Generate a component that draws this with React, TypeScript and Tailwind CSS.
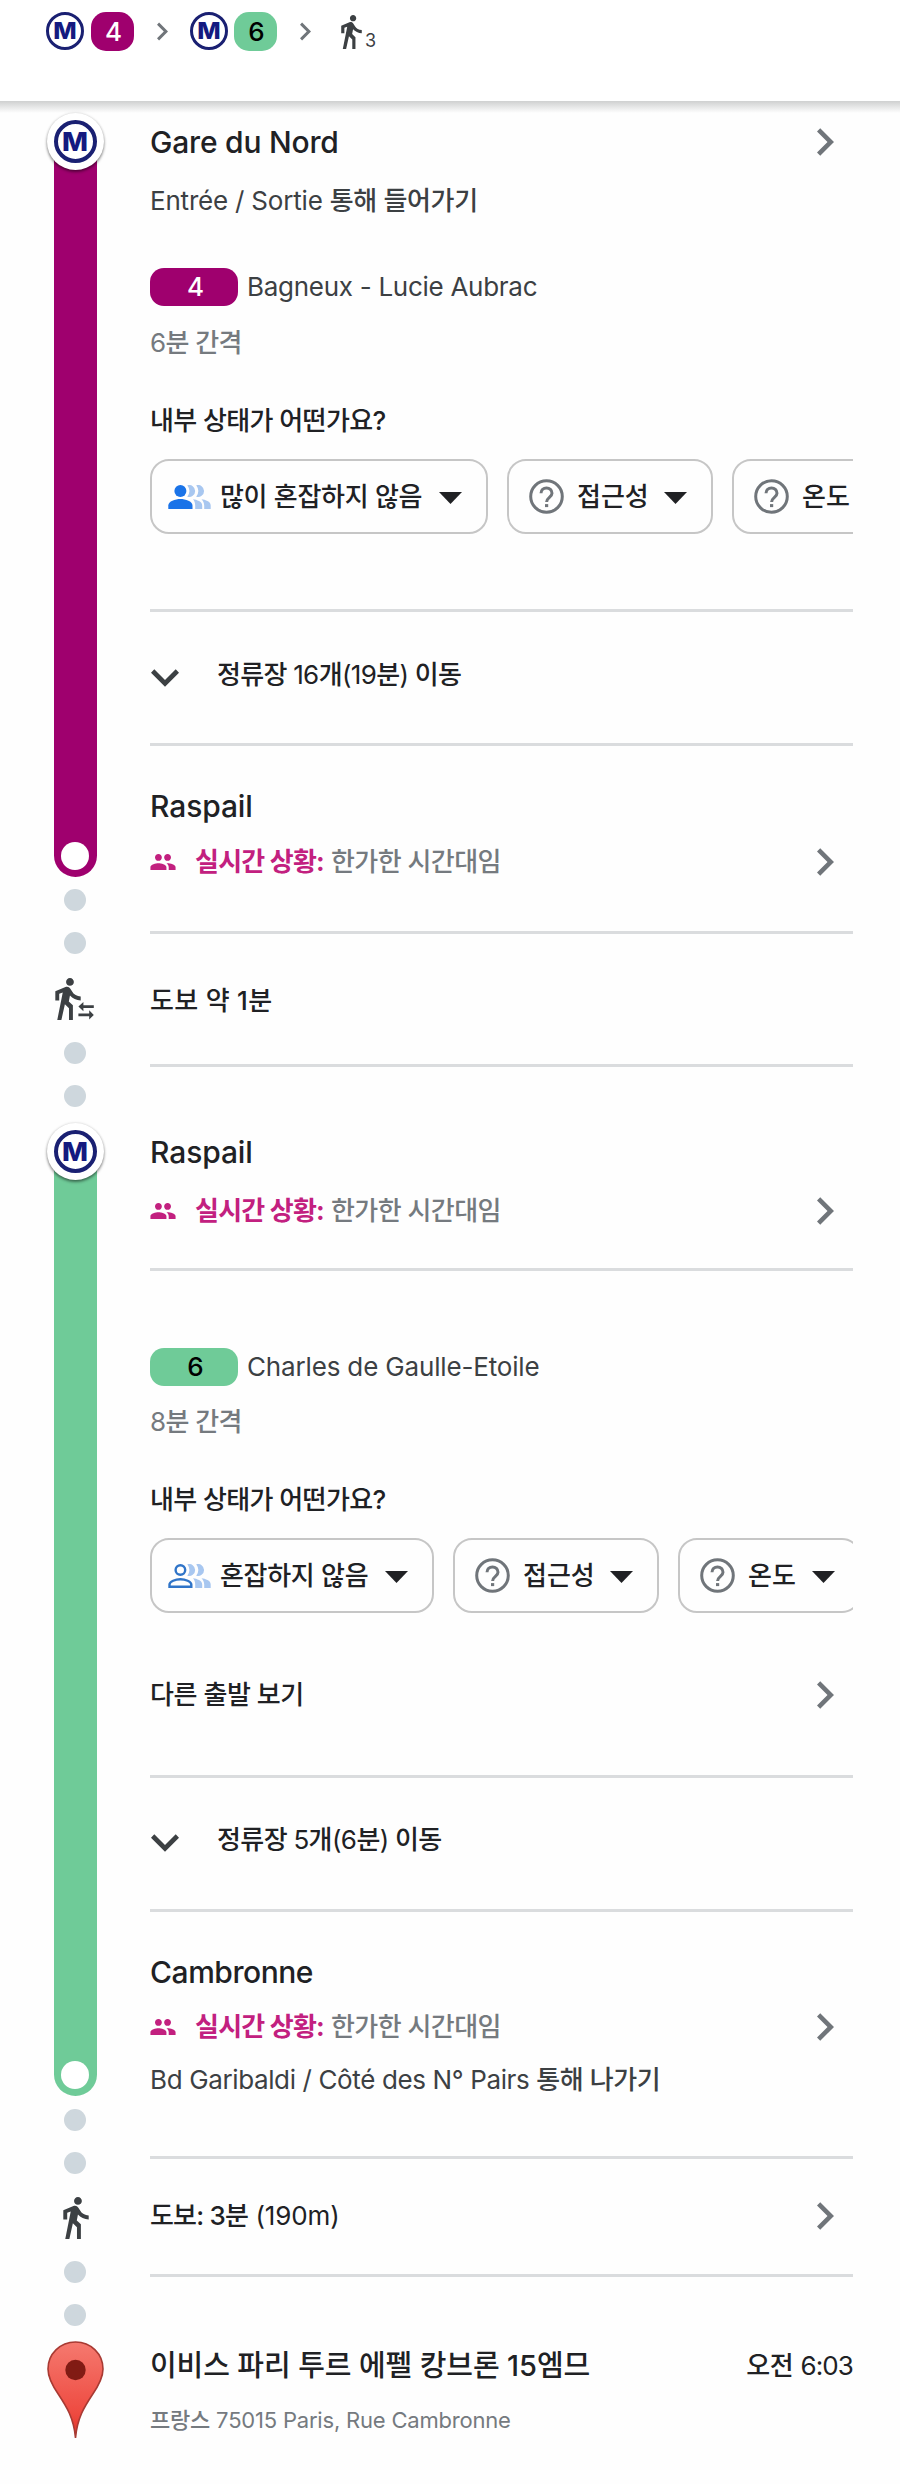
import React from "react";
import clsx from "clsx";

const WALK_PATH =
  "M13.5 5.5c1.1 0 2-.9 2-2s-.9-2-2-2-2 .9-2 2 .9 2 2 2zM9.8 8.9L7 23h2.1l1.8-8 2.1 2v6h2v-7.5l-2.1-2 .6-3C14.8 12 16.8 13 19 13v-2c-1.9 0-3.5-1-4.3-2.4l-1-1.6c-.4-.6-1-1-1.7-1-.3 0-.5.1-.8.1L6 8.3V13h2V9.6l1.8-.7z";

function WalkIcon({ className }: { className: string }) {
  return (
    <svg viewBox="6 1.5 13 21.5" className={clsx("fill-[#3c4043]", className)}>
      <path d={WALK_PATH} />
    </svg>
  );
}

function TransferWalkIcon() {
  return (
    <svg viewBox="0 0 40 42" className="h-[42px] w-[40px] fill-[#3c4043]">
      <g transform="translate(-11.4 -2.93) scale(1.953)">
        <path d={WALK_PATH} />
      </g>
      <path d="M23.4 28.6l5-4.6v3.2h10.4V30H28.4v3.2z" />
      <path d="M38.8 36.9l-4.6 4.6v-3.2H23.4v-2.8h10.8v-3.2z" />
    </svg>
  );
}

function ChevronRight({ className }: { className: string }) {
  return (
    <svg viewBox="8.59 6 7.41 12" className={clsx("shrink-0 fill-[#70757a]", className)}>
      <path d="M8.59 16.59L13.17 12 8.59 7.41 10 6l6 6-6 6z" />
    </svg>
  );
}

function ChevronDown() {
  return (
    <svg viewBox="6 8.59 12 7.41" className="h-[18px] w-[28px] fill-[#3c4043]">
      <path d="M7.41 8.59L12 13.17l4.59-4.58L18 10l-6 6-6-6z" />
    </svg>
  );
}

function GroupIcon() {
  return (
    <svg viewBox="1 5 22 14" className="h-[16px] w-[26px] fill-[#c2207f]">
      <path d="M16 11c1.66 0 2.99-1.34 2.99-3S17.66 5 16 5c-1.66 0-3 1.34-3 3s1.34 3 3 3zm-8 0c1.66 0 2.99-1.34 2.99-3S9.66 5 8 5C6.34 5 5 6.34 5 8s1.34 3 3 3zm0 2c-2.33 0-7 1.17-7 3.5V19h14v-2.5c0-2.33-4.67-3.5-7-3.5zm8 0c-.29 0-.62.02-.97.05 1.16.84 1.97 1.97 1.97 3.45V19h6v-2.5c0-2.33-4.67-3.5-7-3.5z" />
    </svg>
  );
}

// one highlighted person out of three; outlined when the train is emptier
function CrowdIcon({ outlined }: { outlined?: boolean }) {
  return (
    <svg viewBox="0 0 43 24" className="h-[24px] w-[43px]">
      <g className="fill-[#a8c7f0]">
        <path d="M19.3.3a6 6 0 1 1 0 11.4a9.5 9.5 0 0 0 0-11.4z" />
        <path d="M28.2.3a6 6 0 1 1 0 11.4a9.5 9.5 0 0 0 0-11.4z" />
        <path d="M25 14.3c3.8.5 9.2 2.2 9.2 6.2V24h-7v-3.5c0-2.6-.8-4.5-2.2-6.2z" />
        <path d="M33.5 14.3c3.8.5 9.2 2.2 9.2 6.2V24h-6.5v-3.5c0-2.6-1.2-4.5-2.7-6.2z" />
      </g>
      {outlined ? (
        <g className="fill-none stroke-[#2f74c8] stroke-[2.4]">
          <circle cx="12.4" cy="6" r="4.8" />
          <path d="M1.5 22.8v-2.3c0-3 6-5.2 10.9-5.2s10.9 2.2 10.9 5.2v2.3z" />
        </g>
      ) : (
        <g className="fill-[#1a73e8]">
          <circle cx="12.4" cy="6" r="6" />
          <path d="M.3 24v-3.5c0-4 7-6.4 12.1-6.4s12.1 2.4 12.1 6.4V24z" />
        </g>
      )}
    </svg>
  );
}

function HelpIcon() {
  return (
    <svg viewBox="0 0 35 35" className="size-[35px] fill-none stroke-[#70757a] stroke-3">
      <circle cx="17.5" cy="17.5" r="15.8" />
      <path d="M12 14.2a5.5 5.3 0 0 1 11 0c0 4-5.4 4.3-5.4 8.8" />
      <path d="M16 26.6h3.2" />
    </svg>
  );
}

function PinIcon() {
  return (
    <svg viewBox="0 0 57 98" className="mt-[15px] h-[98px] w-[57px]">
      <defs>
        <linearGradient id="pin" x1="0" y1="0" x2="0" y2="1">
          <stop offset="0" stopColor="#f5796f" />
          <stop offset=".75" stopColor="#ee4a40" />
          <stop offset="1" stopColor="#e03127" />
        </linearGradient>
      </defs>
      <path
        d="M28.5 1C13 1 1 13 1 28c0 9.500 5 17.500 10.500 25.500C19.500 65.500 26.800 77 28.500 97 30.200 77 37.500 65.500 45.500 53.500 51 45.500 56 37.500 56 28 56 13 44 1 28.500 1z"
        fill="url(#pin)"
        stroke="#a83a33"
        strokeWidth="1.600"
      />
      <circle cx="28.5" cy="29" r="10.2" fill="#811b14" />
    </svg>
  );
}

function MetroLogo({ small }: { small?: boolean }) {
  return (
    <span
      className={clsx(
        "flex items-center justify-center rounded-full border-[#1a2072] bg-white font-extrabold text-[#141a80]",
        small ? "size-[38px] border-[3.5px] text-[23px]" : "size-[43px] border-4 text-[25.5px]"
      )}
    >
      <span className="scale-x-108 leading-none">M</span>
    </span>
  );
}

function StationMarker({ className }: { className?: string }) {
  return (
    <div
      className={clsx(
        "relative z-10 flex size-[57px] items-center justify-center rounded-full bg-white shadow-[0_2px_3px_rgba(0,0,0,0.45),0_0_3px_rgba(0,0,0,0.15)]",
        className
      )}
    >
      <MetroLogo />
    </div>
  );
}

function LineBar({ className }: { className: string }) {
  return (
    <div className={clsx("-mt-[28px] flex w-[43px] items-end justify-center rounded-b-full pb-[7px]", className)}>
      <span className="size-[28px] rounded-full bg-white" />
    </div>
  );
}

function Dots({ className }: { className: string }) {
  return (
    <div className={clsx("flex flex-col gap-[21px]", className)}>
      <span className="size-[22px] rounded-full bg-[#ced7dd]" />
      <span className="size-[22px] rounded-full bg-[#ced7dd]" />
    </div>
  );
}

function Divider({ className }: { className: string }) {
  return <div className={clsx("h-[3px] bg-[#dadcde]", className)} />;
}

function StationName({ className, children }: { className: string; children: React.ReactNode }) {
  return <h2 className={clsx("h-[40px] text-[30px] leading-[40px] font-[450]", className)}>{children}</h2>;
}

function LiveStatus({ className }: { className: string }) {
  return (
    <div className={clsx("flex h-[36px] items-center", className)}>
      <GroupIcon />
      <span className="ml-[19px] font-bold tracking-[-0.79px] text-[#c2207f]">실시간 상황:</span>
      <span className="ml-[7px] font-medium tracking-[-0.55px] text-[#757a7f]">한가한 시간대임</span>
      <ChevronRight className="mr-[19px] ml-auto h-[28px] w-[17px]" />
    </div>
  );
}

interface LineDirectionProps {
  line: string;
  badge: string;
  name: React.ReactNode;
  className: string;
}

function LineDirection({ line, badge, name, className }: LineDirectionProps) {
  return (
    <div className={clsx("flex h-[38px] items-center", className)}>
      <span className={clsx("flex h-[38px] w-[88px] items-center justify-center rounded-[14px] pl-[3px] font-medium", badge)}>
        {line}
      </span>
      {name}
    </div>
  );
}

function Chip({ icon, label, className }: { icon: React.ReactNode; label: string; className: string }) {
  return (
    <button className={clsx("flex h-[75px] shrink-0 items-center rounded-[19px] border-2 border-[#c6c6c6] font-medium", className)}>
      {icon}
      {label}
      <svg viewBox="0 0 23 12" className="mt-[3px] ml-auto h-[12px] w-[23px] fill-[#202124]">
        <path d="M0 0h23L11.5 12z" />
      </svg>
    </button>
  );
}

export default function App() {
  return (
    <div className="min-h-[2484px] w-[900px] overflow-hidden bg-[#fefefe] font-['Inter','Noto_Sans_CJK_KR',sans-serif] text-[26px] leading-[36px] whitespace-nowrap text-[#202124]">
      <header className="relative flex h-[101px] items-start bg-white pt-[12px] pl-[46px]">
        <MetroLogo small />
        <span className="ml-[7px] flex h-[39px] w-[43px] items-center justify-center rounded-[15px] bg-[#9f006e] pl-[2px] font-medium text-white">
          4
        </span>
        <ChevronRight className="mt-[10px] ml-[23px] h-[19px] w-[11px]" />
        <span className="ml-[22px]">
          <MetroLogo small />
        </span>
        <span className="ml-[6px] flex h-[39px] w-[43px] items-center justify-center rounded-[15px] bg-[#6fcb98] pl-[2px] font-medium text-black">
          6
        </span>
        <ChevronRight className="mt-[10px] ml-[23px] h-[19px] w-[11px]" />
        <WalkIcon className="mt-[3px] ml-[30px] h-[34px] w-[21px]" />
        <span className="mt-[19px] ml-[3px] text-[18px] leading-[20px] text-[#3c4043]">3</span>
        <div className="absolute inset-x-0 top-full h-[12px] bg-linear-to-b from-[#cfd0d0] to-transparent" />
      </header>

      <main className="flex">
        {/* route rail */}
        <div className="flex w-[150px] flex-col items-center">
          <StationMarker className="mt-[12px]" />
          <LineBar className="h-[735px] bg-[#9f006e]" />
          <Dots className="mt-[12px]" />
          <div className="mt-[24px]">
            <TransferWalkIcon />
          </div>
          <Dots className="mt-[22px]" />
          <StationMarker className="mt-[16px]" />
          <LineBar className="h-[944px] bg-[#6fcb98]" />
          <Dots className="mt-[13px]" />
          <WalkIcon className="mt-[23px] ml-[2px] h-[42px] w-[26px]" />
          <Dots className="mt-[22px]" />
          <PinIcon />
        </div>

        <div className="w-[703px]">
          <div className="mt-[21px] flex items-center justify-between">
            <StationName className="tracking-[-0.2px]">Gare du Nord</StationName>
            <ChevronRight className="mr-[19px] h-[28px] w-[17px]" />
          </div>
          <p className="mt-[21px] text-[#3c4043]">
            <span className="tracking-[-0.2px]">Entrée / Sortie </span>
            <span className="font-medium tracking-[-0.35px]">통해 들어가기</span>
          </p>
          <LineDirection
            className="mt-[49px]"
            line="4"
            badge="bg-[#9f006e] text-white"
            name={<span className="ml-[9px] tracking-[-0.28px] text-[#3c4043]">Bagneux - Lucie Aubrac</span>}
          />
          <p className="mt-[19px] tracking-[-0.6px] text-[#757a7f]">
            6<span className="font-medium">분 간격</span>
          </p>
          <p className="mt-[42px] font-medium tracking-[-0.6px]">내부 상태가 어떤가요?</p>
          <div className="mt-[20px] flex gap-[19px] overflow-hidden">
            <Chip
              className="w-[338px] gap-[9px] pr-[24px] pl-[16px] tracking-[-0.3px]"
              icon={<CrowdIcon />}
              label="많이 혼잡하지 않음"
            />
            <Chip className="w-[206px] gap-[13px] pr-[24px] pl-[20px]" icon={<HelpIcon />} label="접근성" />
            <Chip className="w-[183px] gap-[13px] pr-[24px] pl-[20px]" icon={<HelpIcon />} label="온도" />
          </div>
          <Divider className="mt-[75px]" />

          <div className="mt-[45px] flex h-[36px] items-center">
            <span className="mt-[6px] ml-px">
              <ChevronDown />
            </span>
            <p className="ml-[38px] font-medium tracking-[-0.63px]">
              정류장 <span className="font-normal">16</span>개<span className="font-normal">(19</span>분
              <span className="font-normal">)</span> 이동
            </p>
          </div>
          <Divider className="mt-[50px]" />

          <StationName className="mt-[40px] tracking-[-0.1px]">Raspail</StationName>
          <LiveStatus className="mt-[18px]" />
          <Divider className="mt-[51px]" />

          <p className="mt-[49px] font-medium tracking-[0.3px]">도보 약 1분</p>
          <Divider className="mt-[45px]" />

          <StationName className="mt-[65px] tracking-[-0.1px]">Raspail</StationName>
          <LiveStatus className="mt-[21px]" />
          <Divider className="mt-[39px]" />

          <LineDirection
            className="mt-[77px]"
            line="6"
            badge="bg-[#6fcb98] text-black"
            name={<span className="ml-[9px] tracking-[-0.16px] text-[#3c4043]">Charles de Gaulle-Etoile</span>}
          />
          <p className="mt-[18px] tracking-[-0.6px] text-[#757a7f]">
            8<span className="font-medium">분 간격</span>
          </p>
          <p className="mt-[42px] font-medium tracking-[-0.6px]">내부 상태가 어떤가요?</p>
          <div className="mt-[20px] flex gap-[19px] overflow-hidden">
            <Chip
              className="w-[284px] gap-[9px] pr-[24px] pl-[16px] tracking-[-0.3px]"
              icon={<CrowdIcon outlined />}
              label="혼잡하지 않음"
            />
            <Chip className="w-[206px] gap-[13px] pr-[24px] pl-[20px]" icon={<HelpIcon />} label="접근성" />
            <Chip className="w-[183px] gap-[13px] pr-[24px] pl-[20px]" icon={<HelpIcon />} label="온도" />
          </div>
          <div className="mt-[64px] flex items-center justify-between font-medium tracking-[-0.45px]">
            다른 출발 보기
            <ChevronRight className="mr-[19px] h-[28px] w-[17px]" />
          </div>
          <Divider className="mt-[62px]" />

          <div className="mt-[44px] flex h-[36px] items-center">
            <span className="mt-[6px] ml-px">
              <ChevronDown />
            </span>
            <p className="ml-[38px] font-medium tracking-[-0.58px]">
              정류장 <span className="font-normal">5</span>개<span className="font-normal">(6</span>분
              <span className="font-normal">)</span> 이동
            </p>
          </div>
          <Divider className="mt-[51px]" />

          <StationName className="mt-[40px] tracking-[-0.45px]">Cambronne</StationName>
          <LiveStatus className="mt-[17px]" />
          <p className="mt-[17px] text-[#3c4043]">
            <span className="tracking-[-0.37px]">Bd Garibaldi / Côté des N° Pairs </span>
            <span className="font-medium tracking-[-0.45px]">통해 나가기</span>
          </p>
          <Divider className="mt-[58px]" />

          <div className="mt-[39px] flex items-center justify-between">
            <p>
              <span className="font-medium tracking-[-0.8px]">도보: 3분</span>{" "}
              <span className="tracking-[-0.1px]">(190m)</span>
            </p>
            <ChevronRight className="mr-[19px] h-[28px] w-[17px]" />
          </div>
          <Divider className="mt-[40px]" />

          <div className="mt-[69px] flex h-[40px] items-center justify-between">
            <h2 className="text-[29px] font-medium tracking-[-0.1px]">이비스 파리 투르 에펠 캉브론 15엠므</h2>
            <p className="tracking-[-0.3px]">
              <span className="font-medium">오전</span> <span className="tracking-[-0.9px]">6:03</span>
            </p>
          </div>
          <p className="mt-[16px] text-[22px] tracking-[-0.2px] text-[#757a7f]">
            <span className="font-medium">프랑스</span> 75015 Paris, Rue Cambronne
          </p>
        </div>
      </main>
    </div>
  );
}
